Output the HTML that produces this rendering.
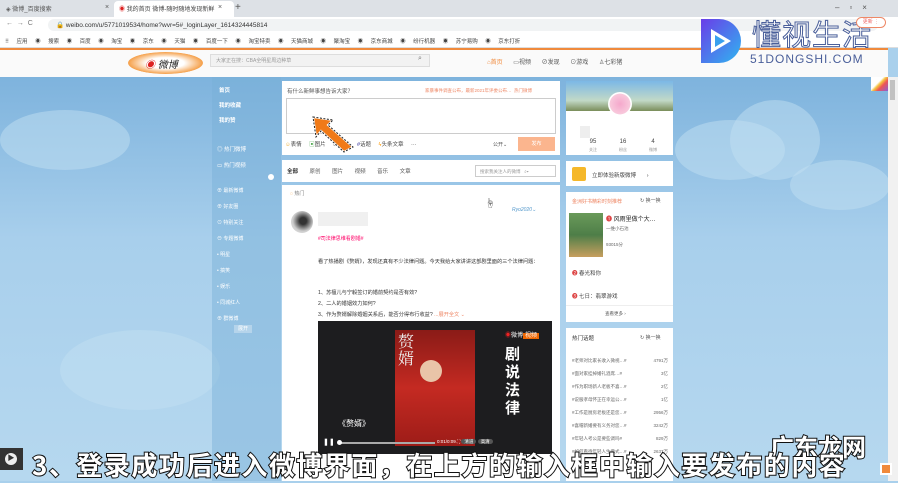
<!DOCTYPE html>
<html><head><meta charset="utf-8"><style>
*{margin:0;padding:0;box-sizing:border-box}
body{width:898px;height:481px;overflow:hidden;position:relative;font-family:"Liberation Sans","Noto Sans CJK SC",sans-serif;font-size:6px;color:#333;background:#a9d0ec}
.a{position:absolute}
.bg{left:0;top:77px;width:888px;height:404px;background:linear-gradient(#7eb3dd,#a8cfec 40%,#b6d8ef)}
.cloud{background:#c2dff2;border-radius:50%;opacity:.5}
.panel{background:#fff}
.nav{color:#fff;font-size:5.5px}
.sub{font-family:"Noto Sans CJK SC",sans-serif;font-weight:bold;font-size:26px;color:#fff;-webkit-text-stroke:2px #111;paint-order:stroke fill;letter-spacing:1.5px;white-space:nowrap}
</style></head><body>
<div class="a" style="left:0;top:0;width:898px;height:17px;background:#dde1e6"></div>
<div class="a" style="left:6px;top:4px;font-size:6px;color:#555">◈ 微博_百度搜索</div>
<div class="a" style="left:105px;top:4px;font-size:7px;color:#555">×</div>
<div class="a" style="left:114px;top:1px;width:120px;height:16px;background:#fff;border-radius:4px 4px 0 0"></div>
<div class="a" style="left:119px;top:4px;font-size:6px;color:#444;white-space:nowrap"><span style="color:#d22">◉</span> 我的首页 微博-随时随地发现新鲜</div>
<div class="a" style="left:218px;top:4px;font-size:7px;color:#555">×</div>
<div class="a" style="left:235px;top:2px;font-size:10px;color:#555">+</div>
<div class="a" style="left:835px;top:3px;font-size:8px;color:#555;letter-spacing:10px">–▫×</div>
<div class="a" style="left:0;top:17px;width:898px;height:16px;background:#fff"></div>
<div class="a" style="left:6px;top:20px;font-size:7px;color:#777">←&nbsp; → &nbsp;C</div>
<div class="a" style="left:48px;top:19px;width:830px;height:12px;background:#f1f3f4;border-radius:6px"></div>
<div class="a" style="left:56px;top:21px;font-size:6.5px;color:#333;white-space:nowrap">🔒 weibo.com/u/5771019534/home?wvr=5#_loginLayer_1614324445814</div>
<div class="a" style="left:0;top:33px;width:898px;height:15px;background:#fff;border-bottom:1px solid #ddd"></div>
<div class="a" style="left:5px;top:37px;font-size:5.5px;color:#444;word-spacing:6px;white-space:nowrap">⠿ 应用 ◉ 搜索 ◉ 百度 ◉ 淘宝 ◉ 京东 ◉ 天猫 ◉ 百度一下 ◉ 淘宝特卖 ◉ 天猫商城 ◉ 聚淘宝 ◉ 京东商城 ◉ 纷行机器 ◉ 苏宁易购 ◉ 京东打折</div>
<div class="a" style="left:0;top:48px;width:888px;height:29px;background:#fafafa;border-top:2px solid #f08a3c"></div>
<div class="a" style="left:128px;top:52px;width:75px;height:22px;border-radius:50%;background:radial-gradient(#fff 35%,#f5a04a 70%,transparent 72%)"></div>
<div class="a" style="left:145px;top:56px;font-size:10px;color:#222;font-style:italic;white-space:nowrap"><span style="color:#d22">◉</span> 微博</div>
<div class="a" style="left:210px;top:54px;width:220px;height:13px;background:#f2f2f2;border:1px solid #ddd"></div>
<div class="a" style="left:216px;top:57px;font-size:5px;color:#999">大家正在搜：CBA全明星周边种草</div>
<div class="a" style="left:418px;top:55px;font-size:7px;color:#777">⌕</div>
<div class="a" style="left:487px;top:57px;font-size:6px;color:#555;word-spacing:9px;white-space:nowrap"><span style="color:#f08a3c">⌂首页</span> ▭视频 ⊘发现 ⊙游戏 ♙七彩猪</div>
<div class="a bg"></div>
<div class="a cloud" style="left:60px;top:330px;width:160px;height:80px"></div>
<div class="a cloud" style="left:675px;top:120px;width:110px;height:60px"></div>
<div class="a cloud" style="left:730px;top:100px;width:90px;height:80px"></div>
<div class="a cloud" style="left:790px;top:160px;width:100px;height:50px"></div>
<div class="a cloud" style="left:0;top:110px;width:130px;height:60px"></div>
<div class="a" style="left:212px;top:77px;width:69px;height:404px;background:rgba(120,175,215,.45)"></div>
<div class="a nav" style="left:219px;top:84px;line-height:15px;font-weight:bold">首页<br>我的收藏<br>我的赞</div>
<div class="a nav" style="left:217px;top:142px;line-height:16px">◎ 热门微博<br>▭ 热门视频</div>
<div class="a" style="left:268px;top:174px;width:6px;height:6px;border-radius:50%;background:#fff"></div>
<div class="a nav" style="left:217px;top:183px;line-height:16px;font-size:5px">⊕ 最新微博<br>⊕ 好友圈<br>⊙ 特别关注<br>⊖ 专题微博<br>• 明星<br>• 搞笑<br>• 娱乐<br>• 同城红人<br>⊕ 群微博</div>
<div class="a" style="left:234px;top:325px;width:18px;height:8px;background:rgba(255,255,255,.3);color:#fff;font-size:5px;text-align:center;line-height:8px">展开</div>
<div class="a panel" style="left:282px;top:81px;width:278px;height:74px"></div>
<div class="a" style="left:287px;top:87px;font-size:5.5px;color:#555">有什么新鲜事想告诉大家？</div>
<div class="a" style="left:425px;top:88px;font-size:4.5px;color:#e86;white-space:nowrap">家暴事件调查公布，最新2021年评委公布…&nbsp; 热门微博</div>
<div class="a" style="left:286px;top:98px;width:270px;height:36px;border:1px solid #ccc;background:#fff"></div>
<div class="a" style="left:285px;top:140px;font-size:5.5px;color:#444;word-spacing:6px;white-space:nowrap"><span style="color:#e9a92a">☺</span>表情 <span style="color:#5a5">▣</span>图片 ▭视频 <span style="color:#339">#</span>话题 <span style="color:#f90">ϟ</span>头条文章 ···</div>
<div class="a" style="left:493px;top:141px;font-size:5px;color:#555">公开⌄</div>
<div class="a" style="left:518px;top:137px;width:37px;height:14px;background:#fbb58e;color:#fff;font-size:5px;text-align:center;line-height:14px">发布</div>
<svg class="a" style="left:308px;top:112px" width="50" height="42"><path d="M5 5 L25 8 L20 13 L45 35 L36 40 L13 19 L8 25 Z" fill="#f07a18" stroke="#fff" stroke-width="2"/><path d="M5 5 L25 8 L20 13 L45 35 L36 40 L13 19 L8 25 Z" fill="none" stroke="#222" stroke-width="1" stroke-dasharray="2 1.5"/></svg>
<div class="a panel" style="left:282px;top:160px;width:278px;height:22px"></div>
<div class="a" style="left:287px;top:167px;font-size:5.5px;color:#555;word-spacing:10px;white-space:nowrap"><b style="color:#333">全部</b> 原创 图片 视频 音乐 文章</div>
<div class="a" style="left:475px;top:165px;width:81px;height:12px;border:1px solid #ccc;font-size:4.5px;color:#999;padding:3px 4px;white-space:nowrap">搜索我关注人的微博 &nbsp; ⌕▾</div>
<div class="a panel" style="left:282px;top:185px;width:278px;height:296px"></div>
<div class="a" style="left:290px;top:190px;font-size:5px;color:#777"><span style="color:#f80">◌</span> 热门</div>
<div class="a" style="left:291px;top:211px;width:22px;height:22px;border-radius:50%;background:radial-gradient(circle at 55% 45%,#333 20%,#ccc 60%,#eee)"></div>
<div class="a" style="left:318px;top:212px;width:50px;height:14px;background:#f0f0f0"></div>
<div class="a" style="left:318px;top:235px;font-size:5px;color:#f06">#司法律思维看剧婚#</div>
<div class="a" style="left:512px;top:207px;font-size:5px;color:#59c;font-style:italic">Ryo2020⌄</div>
<div class="a" style="left:485px;top:195px;font-size:10px;color:#444">☝</div>
<div class="a" style="left:318px;top:257px;font-size:5.2px;color:#333;line-height:11px;width:232px">看了热播剧《赘婿》，发现还真有不少法律问题。今天我给大家讲讲这部剧里面的三个法律问题：</div>
<div class="a" style="left:318px;top:288px;font-size:5.2px;color:#333;line-height:11px;white-space:nowrap">1、苏檀儿与宁毅签订的婚前契约是否有效?<br>2、二人的婚姻效力如何?<br>3、作为赘婿解除婚姻关系后，能否分得布行收益? <span style="color:#e86">...展开全文 ⌄</span></div>
<div class="a" style="left:318px;top:321px;width:234px;height:133px;background:#1d1d1f"></div>
<div class="a" style="left:395px;top:330px;width:80px;height:116px;background:linear-gradient(#8a1b17,#c42a22 50%,#9d1c18)"></div>
<div class="a" style="left:420px;top:360px;width:22px;height:22px;border-radius:50%;background:#e9c4a8"></div>
<div class="a" style="left:398px;top:332px;font-size:16px;color:#eee;font-family:'Noto Serif CJK SC',serif;line-height:17px;width:16px">赘婿</div>
<div class="a" style="left:505px;top:330px;font-size:6px;color:#fff;white-space:nowrap"><span style="color:#e22">◉</span>微博<span style="background:#e60;padding:0 2px">视频</span></div>
<div class="a" style="left:505px;top:346px;font-size:15px;color:#fff;font-weight:bold;line-height:18px;width:16px">剧说法律</div>
<div class="a" style="left:338px;top:418px;font-size:8px;color:#fff;white-space:nowrap">《赘婿》</div>
<div class="a" style="left:323px;top:438px;font-size:7px;color:#fff">❚❚</div>
<div class="a" style="left:340px;top:442px;width:95px;height:1.5px;background:#aaa"></div>
<div class="a" style="left:337px;top:440px;width:5px;height:5px;border-radius:50%;background:#fff"></div>
<div class="a" style="left:437px;top:439px;font-size:4.5px;color:#fff;white-space:nowrap">0:01/0:09 ⛶ <span style="background:#555;border-radius:3px;padding:0 3px">清道</span> <span style="background:#555;border-radius:3px;padding:0 3px">高清</span></div>
<div class="a panel" style="left:566px;top:81px;width:107px;height:74px"></div>
<div class="a" style="left:566px;top:81px;width:107px;height:30px;background:linear-gradient(#7cb8e6,#c2d9c7 65%,#7a8d5a)"></div>
<div class="a" style="left:608px;top:92px;width:24px;height:24px;border-radius:50%;background:radial-gradient(#f5a8cc,#f8c9dc 60%,#fff 62%)"></div>
<div class="a" style="left:580px;top:126px;width:10px;height:12px;background:#eee"></div>
<div class="a" style="left:578px;top:139px;font-size:6px;color:#444;text-align:center;line-height:7px;width:90px;display:flex;justify-content:space-around"><span>95<br><small style="font-size:4px;color:#999">关注</small></span><span>16<br><small style="font-size:4px;color:#999">粉丝</small></span><span>4<br><small style="font-size:4px;color:#999">微博</small></span></div>
<div class="a panel" style="left:566px;top:161px;width:107px;height:25px"></div>
<div class="a" style="left:572px;top:167px;width:14px;height:14px;background:#f5b82a;border-radius:2px"></div>
<div class="a" style="left:592px;top:171px;font-size:5.5px;color:#444;white-space:nowrap">立即体验新版微博 &nbsp;&nbsp;&nbsp;&nbsp;&nbsp; ›</div>
<div class="a panel" style="left:566px;top:192px;width:107px;height:130px"></div>
<div class="a" style="left:572px;top:198px;font-size:5px;color:#e86">金洲好书精彩时刻推荐</div>
<div class="a" style="left:640px;top:197px;font-size:5px;color:#555">↻ 换一换</div>
<div class="a" style="left:569px;top:213px;width:34px;height:44px;background:linear-gradient(#6a9a5a,#4e7e48 50%,#c79f5e)"></div>
<div class="a" style="left:606px;top:214px;font-size:6px;color:#222;white-space:nowrap"><span style="color:#d44">❶</span> 风雨里做个大…</div>
<div class="a" style="left:606px;top:226px;font-size:4.5px;color:#666">一维小石池</div>
<div class="a" style="left:606px;top:242px;font-size:4.5px;color:#666">93015分</div>
<div class="a" style="left:572px;top:269px;font-size:5.5px;color:#444"><span style="color:#d44">❷</span> 春光和你</div>
<div class="a" style="left:572px;top:292px;font-size:5.5px;color:#444"><span style="color:#d44">❸</span> 七日：翡翠游戏</div>
<div class="a" style="left:566px;top:305px;width:107px;border-top:1px solid #eee"></div>
<div class="a" style="left:605px;top:311px;font-size:4.5px;color:#555">查看更多 ›</div>
<div class="a panel" style="left:566px;top:328px;width:107px;height:153px"></div>
<div class="a" style="left:572px;top:334px;font-size:5.5px;color:#333">热门话题</div>
<div class="a" style="left:640px;top:334px;font-size:5px;color:#555">↻ 换一换</div>
<div class="a" style="left:572px;top:354px;font-size:4.5px;color:#666;line-height:13px;width:96px">
<div style="display:flex;justify-content:space-between"><span>#老师对比家长收入微视…#</span><span>4791万</span></div>
<div style="display:flex;justify-content:space-between"><span>#面对家挂掉婚礼酒席…#</span><span>3亿</span></div>
<div style="display:flex;justify-content:space-between"><span>#作为职场新人老板不喜…#</span><span>2亿</span></div>
<div style="display:flex;justify-content:space-between"><span>#说服孝母怀正在幸运公…#</span><span>1亿</span></div>
<div style="display:flex;justify-content:space-between"><span>#工作是厨房老板还是您…#</span><span>2956万</span></div>
<div style="display:flex;justify-content:space-between"><span>#喜帽新婚要有义务对您…#</span><span>3242万</span></div>
<div style="display:flex;justify-content:space-between"><span>#年轻人考公是要些调吗#</span><span>829万</span></div>
<div style="display:flex;justify-content:space-between"><span>#如何看待年轻人生佛式…#</span><span>2637万</span></div>
</div>
<div class="a" style="left:888px;top:77px;width:10px;height:404px;background:#f1f1f1"></div>
<div class="a" style="left:890px;top:80px;width:5px;height:20px;background:#c1c1c1"></div>
<div class="a" style="left:871px;top:77px;width:17px;height:14px;background:linear-gradient(135deg,#fff 40%,#f4c542 50%,#e55 65%,#8b5fd6)"></div>
<div class="a" style="left:880px;top:463px;width:12px;height:12px;background:#f08a3c;border:2px solid #fff"></div>
<svg class="a" style="left:697px;top:16px" width="52" height="48"><defs><linearGradient id="g" x1="0" y1="0" x2="1" y2="1"><stop offset="0" stop-color="#6a3de8"/><stop offset="1" stop-color="#2fb6f0"/></linearGradient></defs><path d="M4 3 H22 A22 22 0 0 1 22 47 H4 Z" fill="url(#g)"/><path d="M14 13 L34 25 L14 37 Z" fill="#fff"/><path d="M18 19 L28 25 L18 31 Z" fill="#3aa0ee"/></svg>
<div class="a" style="left:752px;top:16px;font-size:29px;color:#fff;-webkit-text-stroke:1px #4a5f9a;font-family:'Noto Sans CJK SC',sans-serif;line-height:34px;letter-spacing:1px;white-space:nowrap">懂视生活</div>
<div class="a" style="left:750px;top:52px;font-size:12px;color:#4a5f9a;letter-spacing:1px;white-space:nowrap">51DONGSHI.COM</div>
<div class="a" style="left:856px;top:17px;width:30px;height:11px;border:1px solid #e86;border-radius:6px;font-size:5px;color:#e66;text-align:center;line-height:9px;background:#fff">更新 ⋮</div>
<div class="a" style="left:0;top:448px;width:23px;height:22px;background:#333"></div>
<div class="a" style="left:5px;top:453px;width:12px;height:12px;border-radius:50%;background:#eee;font-size:7px;color:#333;text-align:center;line-height:12px">▶</div>
<div class="a" style="left:770px;top:428px;font-size:24px;color:#fff;font-weight:bold;-webkit-text-stroke:2px #111;paint-order:stroke fill;font-family:'Noto Sans CJK SC',sans-serif;white-space:nowrap">广东龙网</div>
<div class="a sub" style="left:32px;top:446px">3、登录成功后进入微博界面，在上方的输入框中输入要发布的内容</div>
</body></html>
